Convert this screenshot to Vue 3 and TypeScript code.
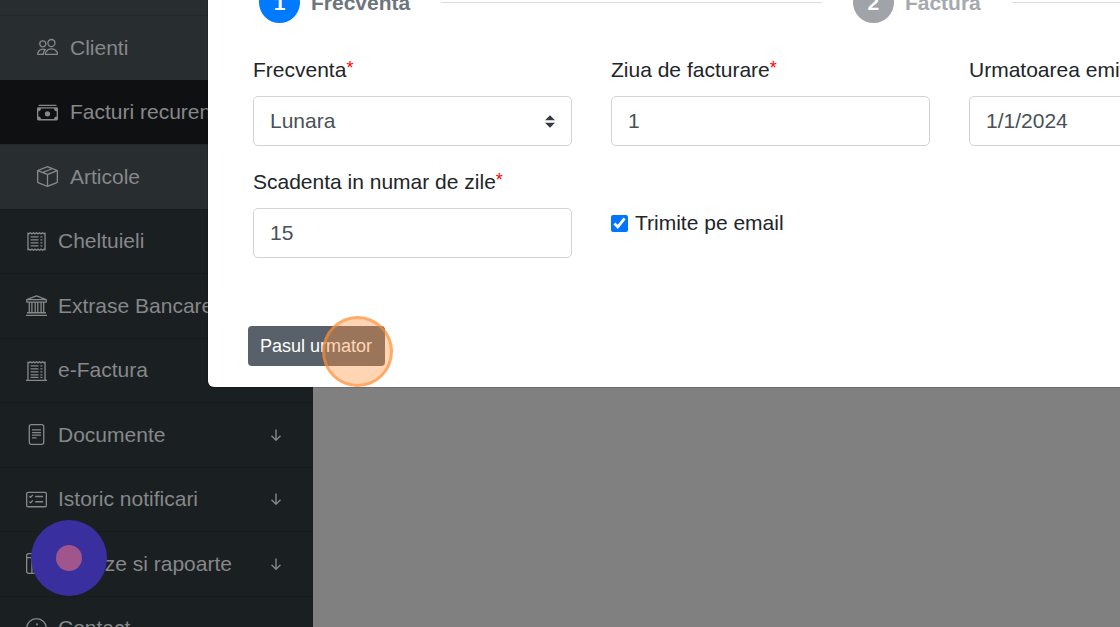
<script setup lang="ts">
import { ref } from 'vue'

interface Item {
  label: string
  icon: string
  expandable?: boolean
}

const subItems: Item[] = [
  { label: 'Clienti', icon: 'people' },
  { label: 'Facturi recurente', icon: 'cash' },
  { label: 'Articole', icon: 'box' },
]

const items: Item[] = [
  { label: 'Cheltuieli', icon: 'receipt' },
  { label: 'Extrase Bancare', icon: 'bank' },
  { label: 'e-Factura', icon: 'cutoff' },
  { label: 'Documente', icon: 'file', expandable: true },
  { label: 'Istoric notificari', icon: 'checklist', expandable: true },
  { label: 'Analize si rapoarte', icon: 'table', expandable: true },
  { label: 'Contact', icon: 'info' },
]

// Outlines drawn on a 16 x 16 grid
const strokes: Record<string, string> = {
  people:
    'M11 7.3a2.7 2.7 0 1 0 0-5.4 2.7 2.7 0 0 0 0 5.4zM6.7 13.3c-.9 0 .1-4.2 4.3-4.2s5.2 4.2 4.3 4.2zM4.4 7.5a2.3 2.3 0 1 0 0-4.6 2.3 2.3 0 0 0 0 4.6zM4.9 13.3h-4c-.9 0-.1-4 3.8-4 .7 0 1.2.1 1.7.3-1.2 1-1.8 2.4-1.5 3.7z',
  receipt:
    'M1.5 1.4v13.2M14.5 1.4v13.2M1.2 1.3l1 .9 1.2-.9 1.15.9 1.15-.9 1.15.9L8 1.3l1.15.9 1.15-.9 1.15.9 1.15-.9 1.2.9 1-.9M1.2 14.7l1-.9 1.2.9 1.15-.9 1.15.9 1.15-.9 1.15.9 1.15-.9 1.15.9 1.15-.9 1.15.9 1.2-.9 1 .9M3.5 4.5h6M3.5 6.8h6M3.5 9.1h6M3.5 11.4h6M11 4.5h1.5M11 6.8h1.5M11 9.1h1.5M11 11.4h1.5',
  cutoff:
    'M1.5 1.4v14M14.5 1.4v14M0 15.5h16M1.2 1.3l1 .9 1.2-.9 1.15.9 1.15-.9 1.15.9L8 1.3l1.15.9 1.15-.9 1.15.9 1.15-.9 1.2.9 1-.9M3.5 4.5h6M3.5 6.8h6M3.5 9.1h6M3.5 11.4h6M3.5 13.3h6M11 4.5h1.5M11 6.8h1.5M11 9.1h1.5M11 11.4h1.5M11 13.3h1.5',
  bank:
    'M.6 3.5 8 .6l7.4 2.9v1.9H.6zM.6 3.5h14.8M2.5 5.5v8M4.5 5.5v8M7 5.5v8M9 5.5v8M11.5 5.5v8M13.5 5.5v8M.8 13.5h14.4M0 15.5h16',
  file:
    'M4 .5h8a1.5 1.5 0 0 1 1.5 1.5v12a1.5 1.5 0 0 1-1.5 1.5H4A1.5 1.5 0 0 1 2.5 14V2A1.5 1.5 0 0 1 4 .5zM4.6 4.5h6.8M4.6 6.5h6.8M4.6 8.5h6.8M4.6 10.5H8',
  checklist:
    'M1.5 2.5h13a1 1 0 0 1 1 1v9a1 1 0 0 1-1 1h-13a1 1 0 0 1-1-1v-9a1 1 0 0 1 1-1zM7 5.7h6M7 9.7h6M2.6 5.4l.9.9 1.7-1.8M2.6 9.6l.9.9 1.7-1.8',
  table:
    'M2 .5h12A1.5 1.5 0 0 1 15.5 2v12a1.5 1.5 0 0 1-1.5 1.5H2A1.5 1.5 0 0 1 .5 14V2A1.5 1.5 0 0 1 2 .5zM.5 3.5h15M4.5 3.5v12',
  info: 'M8 15.5A7.5 7.5 0 1 0 8 .5a7.5 7.5 0 0 0 0 15zM6.6 7.3h1.6l-.8 4.2q0 .8 1.4.3M7.7 4.6h1.4M7.7 5h1.4',
}

const fills: Record<string, string> = {
  cash: 'M1 3a1 1 0 0 1 1-1h12a1 1 0 0 1 1 1zm7 8a2 2 0 1 0 0-4 2 2 0 0 0 0 4M0 5a1 1 0 0 1 1-1h14a1 1 0 0 1 1 1v8a1 1 0 0 1-1 1H1a1 1 0 0 1-1-1zm3 0a2 2 0 0 1-2 2v4a2 2 0 0 1 2 2h10a2 2 0 0 1 2-2V7a2 2 0 0 1-2-2z',
  box: 'M8.186 1.113a.5.5 0 0 0-.372 0L1.846 3.5l2.404.961L10.404 2zm3.564 1.426L5.596 5 8 5.961 14.154 3.5zm3.25 1.7-6.5 2.6v7.922l6.5-2.6V4.24zM7.5 14.762V6.838L1 4.239v7.923zM7.443.184a1.5 1.5 0 0 1 1.114 0l7.129 2.852A.5.5 0 0 1 16 3.5v8.662a1 1 0 0 1-.629.928l-7.185 2.874a.5.5 0 0 1-.372 0L.63 13.09a1 1 0 0 1-.63-.928V3.5a.5.5 0 0 1 .314-.464z',
}

const active = ref('Facturi recurente')
const frequency = ref('Lunara')
const day = ref('1')
const nextIssue = ref('1/1/2024')
const dueDays = ref('15')
const sendEmail = ref(true)
</script>

<template>
  <div class="page">
    <nav class="sidebar">
      <ul class="menu submenu">
        <li v-for="item in subItems" :key="item.label">
          <a href="#" :class="{ active: item.label === active }" @click.prevent="active = item.label">
            <svg class="icon" viewBox="0 0 16 16" aria-hidden="true">
              <path v-if="fills[item.icon]" class="solid" :d="fills[item.icon]" />
              <path v-else class="line" :d="strokes[item.icon]" />
            </svg>
            <span>{{ item.label }}</span>
          </a>
        </li>
      </ul>
      <ul class="menu main">
        <li v-for="item in items" :key="item.label">
          <a href="#" @click.prevent="active = item.label">
            <svg class="icon" viewBox="0 0 16 16" aria-hidden="true">
              <path class="line" :d="strokes[item.icon]" />
            </svg>
            <span>{{ item.label }}</span>
            <svg v-if="item.expandable" class="arrow" viewBox="0 0 12 12" aria-hidden="true">
              <path d="M6 .5v10.5M1.5 6.8 6 11.2l4.5-4.4" />
            </svg>
          </a>
        </li>
      </ul>
    </nav>

    <button class="recorder" type="button" aria-label="Record"><span></span></button>

    <section class="modal" role="dialog" aria-label="Factura recurenta">
      <ol class="steps">
        <li class="step current"><span class="number">1</span><span>Frecventa</span></li>
        <li class="rule" role="presentation"></li>
        <li class="step"><span class="number">2</span><span>Factura</span></li>
        <li class="rule last" role="presentation"></li>
      </ol>
      <form @submit.prevent>
        <div class="fields">
          <div class="field">
            <label for="frequency">Frecventa<i>*</i></label>
            <div class="select">
              <select id="frequency" v-model="frequency">
                <option>Lunara</option>
                <option>Anuala</option>
              </select>
              <svg viewBox="0 0 4 5" aria-hidden="true"><path d="M2 0 0 2h4zM2 5 0 3h4z" /></svg>
            </div>
          </div>
          <div class="field">
            <label for="day">Ziua de facturare<i>*</i></label>
            <input id="day" v-model="day" type="text" />
          </div>
          <div class="field">
            <label for="next">Urmatoarea emitere<i>*</i></label>
            <input id="next" v-model="nextIssue" type="text" />
          </div>
          <div class="field">
            <label for="due">Scadenta in numar de zile<i>*</i></label>
            <input id="due" v-model="dueDays" type="text" />
          </div>
          <div class="check">
            <input id="email" v-model="sendEmail" type="checkbox" />
            <label for="email">Trimite pe email</label>
          </div>
        </div>
        <div class="actions">
          <button class="next" type="submit">Pasul urmator</button>
          <span class="click-marker"></span>
        </div>
      </form>
    </section>
  </div>
</template>

<style>
body {
  margin: 0;
}
</style>

<style scoped>
* {
  box-sizing: border-box;
}

.page {
  position: relative;
  height: 100vh;
  overflow: hidden;
  background: #808080;
  color: #212529;
  font-family: 'Liberation Sans', Arial, Helvetica, sans-serif;
  font-size: 21px;
  line-height: 32px;
}

.sidebar {
  width: 313px;
  min-height: 100%;
  background: #1a1f21;
}

.menu {
  margin: 0;
  padding: 0;
  list-style: none;
}

.submenu {
  padding-top: 15px;
  background: #282d30;
}

.menu a {
  display: flex;
  align-items: center;
  gap: 11px;
  height: 64px;
  padding: 0 31px 1px 26px;
  border-top: 1px solid #171b1d;
  color: #868889;
  text-decoration: none;
  white-space: nowrap;
}

.submenu a {
  gap: 12px;
  padding-left: 37px;
  border-top-color: #23282a;
}

.submenu li:nth-child(odd) a,
.main li:nth-child(even) a {
  height: 65px;
}

.menu a.active {
  border-top-color: #0f1011;
  background: #0f1011;
}

.icon {
  flex: none;
  width: 21px;
  height: 21px;
}

.solid {
  fill: currentColor;
}

.line {
  fill: none;
  stroke: currentColor;
  stroke-width: 1;
  stroke-linejoin: round;
}

.arrow {
  width: 12px;
  height: 12px;
  margin-left: auto;
  fill: none;
  stroke: currentColor;
  stroke-width: 1.4;
}

.recorder {
  position: absolute;
  left: 31px;
  top: 520px;
  display: grid;
  place-items: center;
  width: 76px;
  height: 76px;
  padding: 0;
  border: 0;
  border-radius: 50%;
  background: #392f9e;
}

.recorder span {
  width: 26px;
  height: 26px;
  border-radius: 50%;
  background: #a0558c;
}

.modal {
  position: absolute;
  top: 0;
  left: 208px;
  width: 100vw;
  padding: 0 40px 21px;
  border-radius: 0 0 6px 6px;
  background: #fff;
  box-shadow: 0 0 0 1px rgba(0, 0, 0, 0.15);
}

.steps {
  display: flex;
  align-items: center;
  gap: 31px;
  margin: -18px 0 0;
  padding: 0 0 0 11px;
  list-style: none;
  font-weight: bold;
}

.step {
  display: flex;
  align-items: center;
  gap: 11px;
  color: #a5a9ad;
}

.step.current {
  color: #6c757d;
}

.number {
  display: grid;
  place-items: center;
  width: 41px;
  height: 41px;
  border-radius: 50%;
  background: #a0a3a8;
  color: #fff;
}

.current .number {
  background: #007bff;
}

.rule {
  flex: 0 0 37%;
  height: 1px;
  background: #d8dadc;
}

.rule.last {
  flex: 1;
}

.fields {
  display: grid;
  grid-template-columns: repeat(3, 1fr);
  gap: 20px 39px;
  margin-top: 31px;
  padding-left: 5px;
}

.field label {
  display: block;
  margin-bottom: 10px;
}

.field i {
  color: #f00;
  font-size: 18px;
  font-style: normal;
  line-height: 1;
  vertical-align: 3px;
}

.field input,
.field select {
  display: block;
  width: 100%;
  height: 50px;
  padding: 0 16px;
  border: 1px solid #ced4da;
  border-radius: 5px;
  background: #fff;
  color: #495057;
  font: inherit;
}

.select {
  display: grid;
  align-items: center;
}

.field select {
  grid-area: 1 / 1;
  appearance: none;
}

.select svg {
  grid-area: 1 / 1;
  justify-self: end;
  width: 10px;
  height: 13px;
  margin-right: 17px;
  fill: #343a40;
  pointer-events: none;
}

.check {
  display: flex;
  align-items: center;
  gap: 7px;
  padding-top: 22px;
}

.check input {
  width: 17px;
  height: 17px;
  margin: 0;
  accent-color: #0075ff;
}

.actions {
  position: relative;
  display: flex;
  width: max-content;
  margin-top: 68px;
}

.next {
  height: 40px;
  padding: 0 13px 0 12px;
  border: 0;
  border-radius: 4px;
  background: #586069;
  color: #fff;
  font: inherit;
  font-size: 18px;
}

.click-marker {
  position: absolute;
  right: -8px;
  top: -10px;
  width: 71px;
  height: 71px;
  border: 3px solid rgba(255, 140, 50, 0.6);
  border-radius: 50%;
  background: rgba(255, 149, 68, 0.4);
  pointer-events: none;
}
</style>
